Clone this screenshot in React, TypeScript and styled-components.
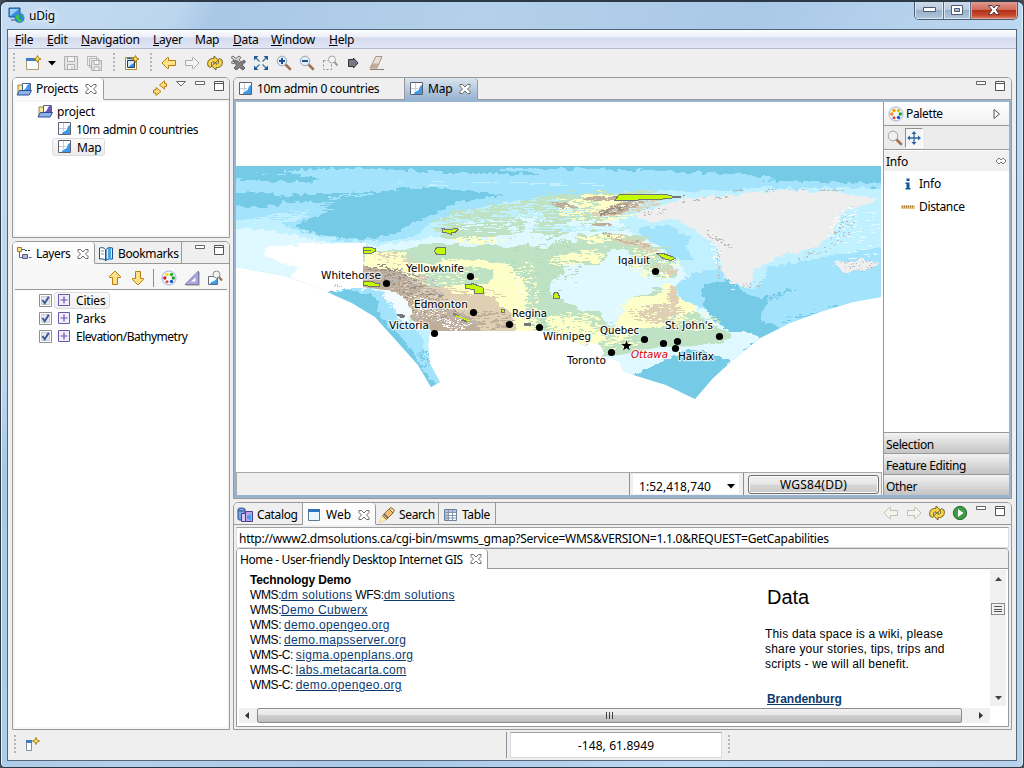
import React from "react";
import styled, { createGlobalStyle } from "styled-components";

const Global = createGlobalStyle`
  * { box-sizing: border-box; }
  html, body { margin: 0; padding: 0; overflow: hidden; background: #4a4f55; }
  body { font-family: "Noto Sans", "Open Sans", sans-serif; font-size: 12px; color: #000; }
  svg { display: block; flex: none; }
`;

/* ---------- window chrome ---------- */
const Frame = styled.div`
  width: 1024px; height: 768px; border: 1px solid #2c3a48; border-top-width: 2px; border-radius: 7px 7px 5px 5px;
  overflow: hidden; display: flex; flex-direction: column; padding: 0 6px;
  background: linear-gradient(115deg, #c5dcf2 0%, #bcd6ee 13%, #a9c8e6 16%, #b4d0ea 35%, #aac9e7 55%, #bdd8f1 75%, #b9d1ea 100%);
  box-shadow: inset 1px 0 #e4f0fb, inset -1px 0 #dff0fb;
`;
const TitleBar = styled.div`height: 27px; display: flex; align-items: center; padding-left: 1px; flex: none;`;
const Title = styled.div`margin-left: 4px; flex: 1; font-size: 12px; letter-spacing: -.2px; text-shadow: 0 0 6px #fff, 0 0 6px #fff;`;
const Caption = styled.div`
  display: flex; height: 19px; align-self: flex-start; margin: -1px -1px 0 0;
  border: 1px solid #4b5b70; border-top: 0; border-radius: 0 0 5px 5px; overflow: hidden;
`;
const CapButton = styled.div<{ $w: number; $close?: boolean }>`
  width: ${p => p.$w}px; display: flex; align-items: center; justify-content: center;
  border-right: ${p => (p.$close ? "0" : "1px solid #5d6f86")};
  box-shadow: inset 0 0 0 1px ${p => (p.$close ? "#e9a092" : "#dce8f4")};
  background: ${p => p.$close
    ? "linear-gradient(#e2a196, #cf6c5a 48%, #b02f16 50%, #c8492f 80%, #dd8870)"
    : "linear-gradient(#cfdceb, #b9cade 48%, #98afc9 50%, #b2c8df)"};
`;
const Client = styled.div`
  width: 1010px; height: 732px; background: #efefef; border: 1px solid #52677c;
  display: flex; flex-direction: column;
`;
const MenuBar = styled.div`
  height: 19px; flex: none; display: flex; align-items: center; padding: 2px 0 0 7px; border-bottom: 1px solid #b3bbcf;
  background: linear-gradient(#fdfdfe 0%, #eceff8 38%, #d5dbee 44%, #e0e6f5 100%);
`;
const MenuItem = styled.div<{ $w: number; $plain?: boolean }>`
  width: ${p => p.$w}px; white-space: nowrap; line-height: 18px; letter-spacing: -.25px;
  &::first-letter { text-decoration: ${p => (p.$plain ? "none" : "underline")}; }
`;
const ToolBar = styled.div`height: 28px; flex: none; display: flex; align-items: center; padding-left: 5px; gap: 7px;`;
const Grip = styled.div<{ $l?: number; $r?: number }>`
  width: 2px; height: 20px; margin: 0 ${p => p.$r ?? 0}px 0 ${p => p.$l ?? 0}px;
  background: repeating-linear-gradient(#b4b4b4 0 2px, transparent 2px 4px);
`;
const Main = styled.div`flex: 1; display: flex; gap: 3px; padding-left: 4px; min-height: 0;`;
const Column = styled.div<{ $w: number }>`width: ${p => p.$w}px; display: flex; flex-direction: column; gap: 3px;`;

/* ---------- view stacks ---------- */
const Panel = styled.div<{ $h: number }>`
  height: ${p => p.$h}px; border: 1px solid #999; border-radius: 5px 5px 0 0; overflow: hidden;
  display: flex; flex-direction: column; background: #f6f6f6;
`;
const Tabs = styled.div`height: 22px; flex: none; display: flex; background: #efefef;`;
const Tab = styled.div<{ $w: number; $state?: "active" | "focus"; $rule?: boolean; $low?: boolean }>`
  width: ${p => p.$w}px; display: flex; align-items: center; gap: 4px; padding: ${p => (p.$low ? 2 : 0)}px 0 0 3px; white-space: nowrap;
  border-right: ${p => (p.$state || p.$rule ? "1px solid #999" : "0")};
  border-bottom: 1px solid ${p => (p.$state === "active" ? "#fafafa" : p.$state === "focus" ? "#99b4d1" : "#999")};
  border-top-right-radius: ${p => (p.$state ? "4px" : "0")};
  background: ${p => p.$state === "active" ? "linear-gradient(#fff, #f8f8f8)" : p.$state === "focus" ? "linear-gradient(#dae5ef, #99b4d1)" : "none"};
  ${p => p.$state === "focus" && "border-left: 1px solid #999;"}
`;
const TabRest = styled.div<{ $pr?: number }>`
  flex: 1; display: flex; justify-content: flex-end; border-bottom: 1px solid #999; padding: 2px ${p => p.$pr ?? 4}px 0 0; gap: 7px;
`;
const Body = styled.div`flex: 1; background: #fff; margin: 2px; overflow: hidden;`;
const Label = styled.span<{ $ls?: number }>`white-space: nowrap; letter-spacing: ${p => p.$ls ?? -0.36}px;`;
const Row = styled.div<{ $pl: number; $gap?: number }>`
  height: 18px; display: flex; align-items: center; padding-left: ${p => p.$pl}px; gap: ${p => p.$gap ?? 4}px;
`;
const Chosen = styled.div`
  height: 18px; display: flex; align-items: center; gap: 5px; padding: 0 3px; margin-left: -4px;
  border: 1px solid #dcdcdc; border-radius: 3px; background: linear-gradient(#fafafa, #ececec);
`;
const LayerName = styled.div<{ $sel?: boolean }>`
  height: 17px; display: flex; align-items: center; gap: 6px; padding: 0 4px 0 3px;
  border: 1px solid ${p => (p.$sel ? "#dcdcdc" : "transparent")}; border-radius: 3px;
  background: ${p => (p.$sel ? "linear-gradient(#fafafa, #eee)" : "none")};
`;
const ViewBar = styled.div`
  height: 26px; flex: none; margin: 0 2px; padding: 2px 4px 0 0; border-bottom: 1px solid #999;
  display: flex; align-items: center; justify-content: flex-end; gap: 7px;
`;
const Divider = styled.div<{ $h: number }>`width: 1px; height: ${p => p.$h}px; background: #909090; flex: none;`;
const LayerList = styled.div`flex: 1; background: #fff; margin: 0 2px 2px; padding-top: 1px;`;

/* ---------- editor ---------- */
const EditorBody = styled.div`flex: 1; border: 2px solid #99b4d1; border-width: 2px 2px 3px; display: flex; background: #fff; min-height: 0;`;
const MapSide = styled.div`width: 647px; display: flex; flex-direction: column;`;
const MapStatus = styled.div`
  height: 23px; flex: none; width: 646px; border: 1px solid #a8a8a8; border-bottom: 0; background: #efefef;
  display: flex; align-items: center; padding-right: 2px;
`;
const Scale = styled.div`
  width: 106px; height: 20px; margin: 0 4px 0 3px; background: #fff; padding: 4px 4px 0 6px; display: flex; align-items: center; justify-content: space-between;
`;
const CrsButton = styled.div`
  width: 131px; height: 19px; margin-left: 4px; border: 1px solid #707070; border-radius: 3px; letter-spacing: .25px;
  display: flex; align-items: center; justify-content: center; box-shadow: inset 0 0 0 1px #fafafa; padding-top: 1px;
  background: linear-gradient(#f0f0f0, #e6e6e6 48%, #d6d6d6 52%, #cacaca);
`;
const Palette = styled.div`flex: 1; border-left: 1px solid #999; display: flex; flex-direction: column;`;
const PaletteHead = styled.div`
  height: 24px; display: flex; align-items: center; gap: 2px; padding: 0 8px 0 4px; border-bottom: 1px solid #999;
  background: linear-gradient(#fff, #f0f0f0);
`;
const PaletteTools = styled.div`
  height: 24px; display: flex; align-items: center; gap: 2px; padding: 0 3px; border-bottom: 1px solid #999; background: #ececec;
`;
const ToolOn = styled.div`
  width: 18px; height: 20px; display: flex; align-items: center; justify-content: center; background: #f6f6f6;
  border: 1px solid #fff; border-top-color: #909090; border-left-color: #909090;
`;
const InfoHead = styled.div`height: 20px; margin: 1px 0 1px; padding: 0 3px 0 2px; background: #f0f0f0; display: flex; align-items: center; justify-content: space-between;`;
const Entry = styled.div`height: 23px; display: flex; align-items: center; gap: 3px; padding-left: 16px;`;
const Spacer = styled.div`flex: 1;`;
const Drawer = styled.div`
  height: 21px; border-top: 1px solid #999; padding: 2px 0 0 2px; display: flex; align-items: center; letter-spacing: -.36px;
  background: linear-gradient(#f2f2f2, #c4c4c4);
`;

/* ---------- web view ---------- */
const WebBody = styled.div`flex: 1; display: flex; flex-direction: column; padding: 2px; background: #efefef; min-height: 0;`;
const Url = styled.div`
  height: 21px; flex: none; border: 1px solid #d8dde6; border-top-color: #a0a0a0; background: #fff; padding: 2px 0 0 2px; display: flex; align-items: center;
`;
const Browser = styled.div`flex: 1; border: 1px solid #999; border-radius: 4px 4px 0 0; display: flex; flex-direction: column; overflow: hidden; background: #fff; min-height: 0;`;
const PageTabs = styled.div`height: 20px; flex: none; display: flex; background: #efefef;`;
const PageTab = styled.div`
  width: 251px; border-right: 1px solid #999; background: #fff; border-radius: 0 4px 0 0; display: flex; align-items: center; gap: 4px; padding-left: 3px;
`;
const PageArea = styled.div`flex: 1; display: flex; min-height: 0; padding: 1px 2px 0 13px; font: 12px/15px "Liberation Sans", Arial, sans-serif;`;
const Links = styled.div`width: 515px; padding-top: 3px; white-space: nowrap; letter-spacing: -.4px;`;
const Bold = styled.b`letter-spacing: -.15px;`;
const A = styled.a`color: #0b3a70; text-decoration: underline; letter-spacing: .32px;`;
const Wiki = styled.div`flex: 1; letter-spacing: .18px;`;
const H2 = styled.div`font-size: 20px; line-height: 24px; padding: 15px 0 18px 2px; height: 57px; letter-spacing: 0;`;
const Region = styled.div`font-weight: 700; padding: 20px 0 0 2px; a { letter-spacing: -.05px; }`;
const VScroll = styled.div`
  width: 16px; height: 136px; background: #f0f0f0; display: flex; flex-direction: column; align-items: center; padding: 7px 0 6px;
`;
const VThumb = styled.div`
  width: 14px; height: 12px; margin-top: 22px; border: 1px solid #8c8c8c; background: #f0f0f0; padding: 2px 2px;
  display: flex; flex-direction: column; justify-content: space-between;
`;
const Bar = styled.div`height: 1px; background: #555;`;
const HScroll = styled.div`
  height: 15px; width: 751px; flex: none; margin: 1px 0 3px 2px; background: #f0f0f0; display: flex; align-items: center; padding: 0 7px 0 6px; gap: 8px;
`;
const HThumb = styled.div`
  flex: 1; height: 15px; margin-right: 9px; border: 1px solid #8c8c8c; border-radius: 2px; display: flex; align-items: center; justify-content: center; gap: 2px;
  background: linear-gradient(#f2f2f2, #e6e6e6 45%, #cfcfd0 50%, #bdbec0);
`;
const Tick = styled.div`width: 1px; height: 7px; background: #444;`;

/* ---------- status line ---------- */
const Status = styled.div`height: 30px; flex: none; display: flex; align-items: center; padding-left: 6px;`;
const Coord = styled.div`
  width: 212px; height: 26px; margin: 0 6px 0 3px; border: 1px solid #d6dbe4; border-top-color: #a0a0a0; background: #fff;
  display: flex; align-items: center; justify-content: center; letter-spacing: .1px;
`;
const StatusGap = styled.div`width: 466px;`;

/* ---------- icons ---------- */
type IconProps = { w?: number; h?: number; box?: string; children: React.ReactNode };
const Icon = ({ w = 16, h = 16, box, children }: IconProps) => (
  <svg width={w} height={h} viewBox={box ?? `0 0 ${w} ${h}`} fill="none">{children}</svg>
);
const CloseX = () => (
  <Icon w={15} h={12} box="-3 0 15 12"><path d="M1 1.500h2.500L6 4l2.500-2.500H11v2L8.500 6 11 8.500v2H8.500L6 8l-2.500 2.500H1v-2L3.500 6 1 3.500z" fill="#fff" stroke="#6a6a6a" /></Icon>
);
const MinIcon = () => <Icon w={12} h={12}><path d="M1.500 1.500h9v3h-9z" fill="#fff" stroke="#666" /></Icon>;
const MaxIcon = () => <Icon w={12} h={12}><path d="M1.500 1.500h9v9h-9zM1.500 3.500h9" fill="#fff" stroke="#555" /></Icon>;
const MapIcon = () => (
  <Icon>
    <path d="M2.500 1.500h12v12h-12z" fill="#fff" stroke="#5c6070" />
    <path d="M7.500 2v8M3 7.500h7" stroke="#c5cdd8" />
    <path d="M14 4v9H6c0-3 3-2 4.500-4S11 5 14 4z" fill="#3d9bec" />
  </Icon>
);
const FolderIcon = ({ tint = "#3d9bec" }: { tint?: string }) => (
  <Icon>
    <path d="M2 13V4h4l1 1h1v8z" fill="#f7e6a0" stroke="#a08838" />
    <path d="M6.500 2.500h8v8h-8z" fill="#fff" stroke="#55618c" />
    <path d="M14 3v7H7c1-2 2-1 3-3s1-4 4-4z" fill={tint} />
    <path d="M1 14l2.500-4.500h12L13 14z" fill="#8fb4e8" stroke="#2c4f9c" />
  </Icon>
);
const Arrow = ({ dir = "left", c = "#b97c10", f = "#ffe287" }: { dir?: string; c?: string; f?: string }) => {
  const r = dir === "left" ? 0 : dir === "up" ? 90 : dir === "right" ? 180 : 270;
  return <Icon><g transform={`rotate(${r} 8 8)`}><path d="M1 8l5.500-5.500h1v3h7v5h-7v3h-1z" fill={f} stroke={c} strokeLinejoin="round" /></g></Icon>;
};
const Sync = () => (
  <Icon>
    <path d="M1 11C-.5 5.500 3 3 7 3.500V1l4.500 4L7 9V6.800C4.500 6.500 3.800 8.500 5 11l-1.500 1.500z" fill="#f7d54b" stroke="#6a5615" strokeWidth=".9" />
    <path d="M15 5c1.500 5.500-2 8-6 7.500V15l-4.500-4L9 7v2.200C11.500 9.500 12.200 7.500 11 5l1.500-1.500z" fill="#f7d54b" stroke="#6a5615" strokeWidth=".9" />
  </Icon>
);
const Link2 = () => (
  <Icon>
    <path d="M14.500 6.500h-2V9L7.500 5 12.500.800V3.500h2z" fill="#ffdf80" stroke="#b97c10" />
    <path d="M1.500 10h2.500V7.500L9 11.500 4 15.500V13H1.500z" fill="#ffdf80" stroke="#b97c10" />
  </Icon>
);
const Spark = ({ x, y }: { x: number; y: number }) => (
  <path d={`M${x} ${y - 3.500}l1 2.500 2.500 1-2.500 1-1 2.500-1-2.500-2.500-1 2.500-1z`} fill="#ffe680" stroke="#a8820c" />
);
const NewIcon = () => (
  <Icon>
    <path d="M1.500 3.500h12v11h-12z" fill="#f2fbff" stroke="#b09a68" /><path d="M1 3h10v3H1z" fill="#3f7cc0" /><Spark x={12.500} y={4} />
  </Icon>
);
const Disk = () => (
  <Icon><path d="M1.500 1.500h13v13h-13z" fill="#e4e4e4" stroke="#b0b0b0" /><path d="M4.500 1.500h7v5h-7zM4.500 14v-4.500h7V14M9 11v3" fill="#f4f4f4" stroke="#b0b0b0" /></Icon>
);
const Disks = () => (
  <Icon>
    <path d="M1.500 1.500h9v9h-9zM3.500 3.500h9v9h-9z" fill="#eee" stroke="#b8b8b8" />
    <path d="M5.500 5.500h10v10h-10z" fill="#e4e4e4" stroke="#b0b0b0" /><path d="M8 5.500h5v4H8zM8 15v-3h5v3" fill="#f4f4f4" stroke="#b0b0b0" />
  </Icon>
);
const NewMap = () => (
  <Icon>
    <path d="M2.500 2.500h11v12h-11z" fill="#fff" stroke="#a98a2c" /><path d="M4.500 5.500h7v7h-7z" fill="#d9ecfb" stroke="#333a50" />
    <path d="M11 7v5H6c1-3 4-2 5-5z" fill="#2f8ee6" /><path d="M4 3.500h5" stroke="#2f5fa8" strokeWidth="1.500" /><Spark x={12.500} y={4} />
  </Icon>
);
const Delete = () => (
  <Icon>
    <path d="M1 2.500L3 1l3 2.500L9 1l2 1.500L9 5l3 2.500L10 9 6 7 3 9 1 7.500 4 5z" fill="#d8d8d8" stroke="#6a6a6a" />
    <path d="M3 6l3.500-.5L10 8l4-3 1.500 2L12 10l3 3-2 2-3.500-2.500L6 15l-2-2 2.500-3z" fill="#808080" stroke="#606060" />
  </Icon>
);
const Extent = () => (
  <Icon>
    <path d="M3 3l3.500 3.500M13 3L9.500 6.500M3 13l3.500-3.500M13 13L9.500 9.500" stroke="#3b74a8" strokeWidth="1.300" />
    <path d="M1 1h4.500L1 5.500zM15 1h-4.500L15 5.500zM1 15h4.500L1 10.500zM15 15h-4.500l4.500-4.500z" fill="#1f5c96" />
  </Icon>
);
const Zoom = ({ plus, plain }: { plus?: boolean; plain?: boolean }) => (
  <Icon>
    <path d="M9.500 9.500L14 14" stroke="#a2714f" strokeWidth="2.600" strokeLinecap="round" />
    <circle cx="6" cy="6" r="4.800" fill={plain ? "#f2f2e8" : "#e0ecf8"} stroke="#9aa6b0" />
    {!plain && <path d={plus ? "M3 6h6M6 3v6" : "M3 6h6"} stroke="#1c4f96" strokeWidth="2" />}
  </Icon>
);
const ZoomBox = () => (
  <Icon>
    <path d="M1.500 5.500h8v9h-8z" stroke="#8c8c8c" strokeDasharray="2 2" />
    <circle cx="10" cy="4.500" r="3.500" fill="#f4f4f4" stroke="#a8a8a8" /><path d="M12.500 7l3 3.500" stroke="#999" strokeWidth="2" />
  </Icon>
);
const Commit = () => <Icon><path d="M3.500 4.500h5V3L13 8l-4.500 5v-1.500h-5z" fill="#777986" stroke="#25262e" strokeWidth=".9" /></Icon>;
const Eraser = () => (
  <Icon w={18}>
    <path d="M2 13L8 1.500h6L9 13z" fill="#eadfd4" stroke="#a8958a" /><path d="M2 13l2.500-4.500h6L9 13z" fill="#c7aa94" /><path d="M2 14.500h14" stroke="#8c7c70" />
  </Icon>
);
const AppIcon = () => (
  <Icon w={17} h={17}>
    <path d="M1 1h11v9H1z" fill="#3f8fd8" stroke="#1c5590" /><path d="M2 2h9L2 9z" fill="#9bd0fa" /><path d="M3 12h6v2H3z" fill="#7894b8" />
    <circle cx="11.500" cy="11" r="5" fill="#2f82d4" /><path d="M8 9c2-4 4 0 3 2s2 0 3 2-3 3-4 1-3-2-2-5zM13 7l3 3-1 1z" fill="#3fc24a" />
  </Icon>
);
const LayersIcon = () => (
  <Icon>
    <path d="M1.500 1.500h4v4h-4z" fill="#ffdf80" stroke="#a87b1c" /><path d="M3.500 6v5.500h3M6 3.500h3M13 11.500h2.500" stroke="#2f6fb4" />
    <path d="M6.500 8.500h5v4h-5z" fill="#b9b2d8" stroke="#5c5c80" /><path d="M9 4.500h5" stroke="#333" strokeDasharray="2 1" />
  </Icon>
);
const Book = () => (
  <Icon>
    <path d="M1.500 2c3-1 5 0 6 1.500v11C6 13 4 12.500 1.500 13z" fill="#fff" stroke="#1d4f8c" /><path d="M8 3.500C9 2 11 1 14.500 2v11C12 12.500 9 13 8 14.500z" fill="#d6eaf8" stroke="#1d4f8c" />
    <path d="M10 2h3v12.500L11.500 12.500 10 14.500z" fill="#4ba3e0" /><path d="M3 5c1.500-.5 2 0 3 .500M3 8c1.500-.5 2 0 3 .500" stroke="#7a8a9a" />
  </Icon>
);
const PaletteIcon = ({ warm }: { warm?: boolean }) => (
  <Icon>
    <circle cx="8" cy="8" r="7" fill="#f3f8ff" stroke="#9cb4d8" />
    <circle cx="6" cy="4.500" r="1.700" fill={warm ? "#f5a000" : "#f5dc00"} /><circle cx="10.500" cy="4.500" r="1.700" fill={warm ? "#d8c400" : "#28b428"} />
    <circle cx="3.800" cy="8" r="1.700" fill={warm ? "#f08c20" : "#d81c1c"} /><circle cx="12.300" cy="8" r="1.700" fill="#1f9c2c" />
    <circle cx="6" cy="11.800" r="1.500" fill={warm ? "#e04038" : "#e04848"} /><circle cx="10.500" cy="11.500" r="1.700" fill="#2454c4" />
  </Icon>
);
const Triangle = () => (
  <Icon><path d="M14.500 1v13.500H1z" fill="#a9a6d8" stroke="#7f7cb0" /><path d="M11.500 7.500v4H7z" fill="#fff" /><path d="M2 15.500h13.500V2" stroke="#c8c4a8" /></Icon>
);
const MapZoom = () => (
  <Icon>
    <path d="M1.500 6.500h9v8h-9z" fill="#fff" stroke="#666a78" /><path d="M10 8v6H3c1-3 5-2 7-6z" fill="#3d9bec" />
    <circle cx="9.500" cy="4.500" r="3.500" fill="#f2f2ee" stroke="#8c9098" /><path d="M12 7l3 3.500" stroke="#8d7050" strokeWidth="2" />
  </Icon>
);
const Check = () => (
  <Icon w={13} h={13}><path d="M.5.5h12v12H.5z" fill="#fff" stroke="#8e8f8f" /><path d="M2.500 2.500h8v8h-8z" fill="#e6eaf0" stroke="#c8ccd2" /><path d="M3.500 6l2.200 3.200L9.800 2.800" stroke="#3d5896" strokeWidth="2" /></Icon>
);
const Grid = () => <Icon w={12} h={12}><path d="M.5.500h11v11H.500z" fill="#f0ecfa" stroke="#6b57ac" /><path d="M6 2.500v7M2.500 6h7" stroke="#6b57ac" strokeWidth="1.200" /></Icon>;
const Pan = () => (
  <Icon w={14} h={14}><path d="M7 2v10M2 7h10" stroke="#2f64a8" strokeWidth="1.300" /><path d="M7 0l2.500 3h-5zM7 14l2.500-3h-5zM0 7l3-2.500v5zM14 7l-3-2.500v5z" fill="#2f64a8" /></Icon>
);
const InfoIcon = () => <Icon><path d="M6.500 2.500h3V5h-3zM5.500 6.500h4V12h1v1.500h-5V12h1V8h-1z" fill="#14569c" /></Icon>;
const Ruler = () => <Icon><path d="M1 6.500h14v3.500H1z" fill="#ecc680" /><path d="M2.500 6.500v2M4.500 6.500v2M6.500 6.500v2M8.500 6.500v2M10.500 6.500v2M12.500 6.500v2" stroke="#a07838" /></Icon>;
const Pin = () => <Icon w={11} h={8}><path d="M1 4l3-3 2 2 2-2 3 3-3 3-2-2-2 2z" fill="#fff" stroke="#777" /></Icon>;
const CatalogIcon = () => (
  <Icon>
    <path d="M1 2.500c0-2 7-2 7 0V12c0 1.500-7 1.500-7 0z" fill="#7ba6e4" stroke="#28488c" /><path d="M1 3c2 1.500 5 1.500 7 0" stroke="#28488c" />
    <path d="M4.500 6.500h4v8h-4z" fill="#d8ccf4" stroke="#4c3c98" /><path d="M8.500 4.500h7v10h-7z" fill="#b7a4e6" stroke="#4c3c98" /><path d="M10 9l4-2v6l-4-1z" fill="#4aa0ec" />
  </Icon>
);
const WebIcon = () => <Icon><path d="M2.500 2.500h11v11h-11z" fill="#eaf6ff" stroke="#5b7894" /><path d="M2 2h12v3H2z" fill="#2f74bc" /></Icon>;
const Torch = () => (
  <Icon>
    <path d="M3 9l4 4-4 1.500L.500 15.500z" fill="#fff2b0" stroke="#d8c880" strokeWidth=".6" /><path d="M10 2l4 4-6.500 6.500-4-4z" fill="#f0c070" stroke="#96682c" />
    <path d="M10 2l2-1.500L15.500 3 14 6z" fill="#f0d8a0" stroke="#8a6a3c" /><path d="M5 7l4 4" stroke="#60607c" strokeWidth="1.600" />
  </Icon>
);
const TableIcon = () => (
  <Icon><path d="M2.500 2.500h12v11h-12z" fill="#fff" stroke="#6c8098" /><path d="M3 3h11v2H3zM3 5h3v8H3z" fill="#b4c4da" /><path d="M2.500 5.500h12M2.500 8.500h12M2.500 11h12M6.500 3v11M10.500 3v11" stroke="#8598b0" /></Icon>
);
const Play = () => <Icon><circle cx="8" cy="8" r="6.700" fill="#3f9c46" stroke="#286c34" /><path d="M6 4l5.500 4L6 12z" fill="#fff" /></Icon>;
const FastView = () => <Icon><path d="M2.500 3.500h5v10h-5z" fill="#fff" stroke="#7a8ea4" /><path d="M2 3h6v3H2z" fill="#3f7cc0" /><Spark x={12} y={4} /></Icon>;
const Caret = ({ w = 8, d = "M0 0h8L4 4.500z", h = 5, c = "#000" }: { w?: number; h?: number; d?: string; c?: string }) => <Icon w={w} h={h}><path d={d} fill={c} /></Icon>;

/* ---------- map ---------- */
const C = { deep: "#74cae6", mid: "#a3e3fb", light: "#c1f0ff", pale: "#e0f8ff", green: "#bfe2c5", green2: "#b2dabb", yellow: "#fefec8", tan: "#dfd0b4", brown: "#c0ae9c", dark: "#9d9186", ice: "#eeeeee", white: "#ffffff", grey: "#bdbdbd" };

const makeRandom = (seed: number) => () => {
  seed = (seed * 1664525 + 1013904223) % 4294967296;
  return seed / 4294967296;
};
/* Builds one path of small pixel dashes spread over an ellipse. */
const speckle = (cx: number, cy: number, rx: number, ry: number, n: number, seed: number, len = 3, slope = 0) => {
  const rnd = makeRandom(seed);
  let d = "";
  for (let i = 0; i < n; i++) {
    const a = rnd() * Math.PI * 2;
    const r = Math.sqrt(rnd());
    const dx = Math.cos(a) * r * rx;
    const x = Math.round(cx + dx);
    const y = Math.round(cy + Math.sin(a) * r * ry + dx * slope);
    const l = 1 + Math.floor(rnd() * len);
    d += `M${x} ${y}h${l}v1h-${l}z`;
  }
  return d;
};
type Speck = [string, number, number, number, number, number, number?, number?];
const landSpecks: Speck[] = [
  [C.green, 465, 218, 36, 5, 90, 8, -.1], [C.green, 500, 210, 40, 6, 130, 8, -.2], [C.green, 555, 206, 40, 12, 200, 8],
  [C.pale, 520, 226, 70, 7, 110, 10], [C.light, 500, 214, 60, 7, 70, 10, -.1], [C.light, 575, 228, 50, 3, 60, 12], [C.light, 545, 210, 40, 12, 80, 8],
  [C.green2, 545, 265, 38, 30, 120, 4], [C.yellow, 477, 240, 26, 4, 80, 6],
  [C.yellow, 565, 260, 18, 6, 80, 6], [C.yellow, 592, 255, 10, 6, 50, 5], [C.yellow, 600, 210, 45, 12, 150, 6],
  [C.yellow, 525, 290, 14, 30, 130, 3], [C.green, 535, 300, 12, 34, 120, 3], [C.white, 525, 300, 12, 38, 60, 1],
  [C.yellow, 440, 273, 40, 12, 90, 4], [C.tan, 455, 296, 46, 10, 160, 6],
  [C.tan, 395, 258, 24, 6, 70, 4, .2], [C.green, 440, 256, 40, 5, 60, 4],
  [C.dark, 395, 276, 30, 9, 140, 3, .3], [C.grey, 412, 282, 30, 12, 160, 3, .3],
  [C.dark, 425, 302, 34, 14, 110, 3, .2], [C.tan, 420, 298, 30, 18, 140, 3, .2], [C.grey, 440, 315, 34, 12, 110, 3, .1],
  [C.white, 425, 308, 24, 10, 60, 2, .3], [C.white, 455, 324, 16, 6, 70, 2], [C.brown, 485, 320, 30, 9, 120, 6],
  [C.yellow, 525, 322, 14, 8, 60, 5], [C.green2, 538, 322, 10, 8, 70, 3],
  [C.yellow, 572, 322, 28, 10, 150, 6], [C.green, 580, 324, 34, 10, 60, 4],
  [C.yellow, 650, 310, 38, 16, 120, 4], [C.tan, 655, 313, 28, 10, 120, 6], [C.tan, 672, 298, 6, 12, 70, 3],
  [C.green, 688, 322, 30, 10, 100, 5], [C.yellow, 690, 320, 24, 10, 70, 4], [C.white, 645, 312, 32, 16, 30, 1],
  [C.green, 640, 338, 40, 9, 70, 5], [C.yellow, 612, 343, 25, 6, 60, 4],
  [C.tan, 630, 242, 28, 5, 100, 6, .33], [C.brown, 625, 240, 26, 3, 50, 4, .3], [C.yellow, 655, 257, 26, 5, 50, 4, .3],
  [C.tan, 664, 269, 12, 5, 80, 4, .2], [C.yellow, 648, 272, 20, 6, 60, 4, .2], [C.yellow, 600, 237, 24, 3, 60, 5],
  [C.tan, 625, 207, 36, 6, 160, 6, -.2], [C.brown, 620, 207, 20, 5, 110, 5, -.3], [C.dark, 612, 209, 14, 4, 50, 4, -.3],
  [C.brown, 600, 198, 20, 2, 60, 6], [C.brown, 563, 205, 12, 3, 50, 4, .2], [C.brown, 600, 224, 9, 1.500, 40, 5],
  [C.dark, 650, 196, 38, 2, 40, 4],
];
const seaSpecks: Speck[] = [
  [C.light, 500, 183, 120, 3, 16, 20], [C.mid, 285, 173, 50, 2, 10, 14], [C.mid, 345, 196, 30, 2, 20, 8, -.1], [C.mid, 290, 210, 38, 8, 80, 12, -.15],
  [C.light, 275, 218, 34, 6, 70, 12, -.2], [C.pale, 730, 260, 10, 30, 50, 4, .5], [C.pale, 862, 240, 20, 30, 50, 6, -.3],
  [C.mid, 779, 303, 14, 12, 140, 2], [C.deep, 800, 315, 40, 3, 20, 5, -.3],
  [C.pale, 398, 306, 14, 8, 60, 3, .6], [C.white, 395, 300, 14, 8, 60, 3, .6], [C.grey, 337, 285, 4, 2, 8, 1], [C.deep, 424, 358, 8, 9, 60, 2],
];
const iceSpecks: Speck[] = [
  [C.grey, 650, 211, 16, 4, 22, 2], [C.grey, 700, 199, 26, 2, 14, 3, -.1], [C.grey, 714, 237, 16, 3, 34, 2, .6], [C.grey, 719, 262, 3, 18, 28, 1, .2], [C.white, 716, 245, 6, 20, 30, 2, .4],
  [C.grey, 842, 228, 14, 14, 44, 2, -.8], [C.white, 842, 226, 16, 18, 50, 3, -.6], [C.grey, 790, 190, 60, 1.500, 26, 3], [C.grey, 752, 284, 12, 4, 20, 1], [C.grey, 860, 265, 18, 6, 40, 1], [C.grey, 815, 252, 20, 3, 20, 2, -.3],
];
const Specks = ({ list, seed }: { list: Speck[]; seed: number }) => (
  <>{list.map(([fill, cx, cy, rx, ry, n, len, slope], i) => (
    <path key={i} fill={fill} d={speckle(cx, cy, rx, ry, n, seed + i * 977, len, slope)} />
  ))}</>
);

const cities: [string, number, number, number, number, number][] = [
  ["Whitehorse", 321, 279, 60, 386.500, 283.500], ["Yellowknife", 406, 272, 58, 470.500, 276.500], ["Edmonton", 414, 308, 54, 473.500, 312.500],
  ["Regina", 512, 317, 35, 509.500, 324.500], ["Winnipeg", 543, 340, 48, 539.500, 327.500], ["Victoria", 389, 329, 40, 434.500, 333.500],
  ["Iqaluit", 618, 264, 32, 655.500, 271.500], ["Quebec", 600, 334, 39, 644.500, 339.500], ["St. John's", 665, 329, 48, 719.500, 336.500],
  ["Toronto", 567, 364, 39, 611.500, 352.500], ["Halifax", 678, 360, 36, 675.500, 348.500],
];
const parks = [
  "M363 247.500h8l4 1v3l-4 2h-8zM363 250.500h8", "M363 281.500h9l4 2h3v3h-6l-10-1z", "M442 228.500l5 1h3l7-1 1 1-3 3h-3l-1 2-5-2h-3z", "M434 251l3-3.500h8v7h-8z",
  "M465 284.500h6l1-1 6 2 5 2 1 6h-10v-4l-9-1z", "M453 313.500l3 1 5 3 5 4M461 320.500l6 1", "M553.500 298v-4l2-2h2l1 3 1 1v2z", "M501.500 309.500h3v3h-3z",
  "M615 200l4-5 15-1h30l8 2 9 1-18 2-25 1z", "M657 253.500h6l9 3 3 2-4 2-8-2z",
];
const MapCanvas = () => (
  <svg width="645" height="370" viewBox="236 102 645 370" shapeRendering="crispEdges">
    <defs>
      <clipPath id="extent"><path d="M236 166H881V297L853 302 820 312 790 323 760 338 733 360 713 378 695 399 666 385 637 376 623 371 620 362 608 357 598 357 586 346 570 340 545 331H430L428 345 430 364 440 382 431 387 418 365 402 347 375 317 352 303 334 295 316 287 285 276 236 267z" /></clipPath>
      <clipPath id="canada"><path d="M363 244L430 238V190H760V340L700 346 660 347 620 355 598 357 586 346 570 340 545 331H432L424 325 412 320 405 308 395 298 385 290 363 287z" /></clipPath>
      <filter id="coast" x="0" y="0" width="100%" height="100%">
        <feTurbulence type="fractalNoise" baseFrequency=".035 .1" numOctaves="4" seed="7" />
        <feDisplacementMap in="SourceGraphic" scale="15" xChannelSelector="R" yChannelSelector="G" />
      </filter>
      <filter id="frayed" x="0" y="0" width="100%" height="100%">
        <feTurbulence type="fractalNoise" baseFrequency=".06 .2" numOctaves="4" seed="3" />
        <feDisplacementMap in="SourceGraphic" scale="26" xChannelSelector="R" yChannelSelector="G" />
      </filter>
      <filter id="rough" x="0" y="0" width="100%" height="100%">
        <feTurbulence type="fractalNoise" baseFrequency=".12 .2" numOctaves="2" seed="5" />
        <feDisplacementMap in="SourceGraphic" scale="8" xChannelSelector="R" yChannelSelector="G" />
      </filter>
    </defs>
    <g clipPath="url(#extent)">
      <path d="M236 166H881V400H236z" fill={C.mid} />
      <g filter="url(#rough)">
        <path d="M220 155H900V182H840L760 181 780 178 740 174 640 170 500 168V171L550 174 520 175 430 171 360 168 280 171 320 178 310 182 220 180z" fill={C.deep} />
        <path d="M853 190l20-3 20-1v7l-20 0z" fill={C.deep} />
        <path d="M230 193l32-2 12 4 20 0 30-2 55-1 20-3 32-2 30 4 46 4-50 7-15 9-28 12-16 9-22 6-26 1-30-4-25-8 32-18-12-6-30-1-20 6-35-2z" fill={C.deep} />
        <path d="M225 221l45-3 22 10 25 8 32 5 40 0 25-4 15-12 25-12 50-10 50-6 90-6 80 0 40-3 130 0V245l-70 12-55 10-8 18-20 10-20 2-14 22 40 10-40 30-60 35H540L520 330H230z" fill={C.light} />
        <path d="M225 227l50 4 42 10 40 6 35-3 40-6 55-14 60-12 60-4 26 25 34 20 30 30 12 20 30 30 30 8-20 20-40 6-50 0-30 10H536L500 330H400l-30-40-145-15z" fill={C.pale} />
        <path d="M640 228l28-3 22 12-3 10 6 14-18-2-14-12-20-10zM688 275l30-6 14 4 10 12 14 5 14-20 40-2 70-20V310l-90 30-60 0-10-20-30-16-20-12z" fill={C.mid} />
        <path d="M703 285l22-5 10 4 12 12 14 2 36-10-28 14-10 10 4 10 15 4 6 8-34 18-22-8-12-20-12-16z" fill={C.deep} />
        <path d="M628 378l30-15 30-14 25 6 18 6-36 45z" fill={C.deep} />
        <path d="M676 338l20-14 20-2 12 10 22 0 10 6-24 16-10 4-24-12z" fill={C.pale} />
      </g>
      <path d="M262 250l12-6 30-1 22 1 40 0V294h-24l-30-5-26-10 12-12-22-8z" fill="#fff" filter="url(#coast)" />
      <g filter="url(#rough)">
        <path d="M330 291l30-3 20 4 14 12 8 18 16 8 12 8v20l12 24-10 10-70-72z" fill={C.mid} />
        <path d="M326 292l22-2 16 2 12 6 2 14 10 14 16 14 20 30 12 14-6 6-60-66z" fill={C.deep} />
        <path d="M380 290h8l18 16 8 18 16 6 0 28-8-4-4-20-14-14z" fill={C.light} />
        <path d="M398 328l14-2 10 10 4 26-10-6-12-16z" fill={C.mid} />
      </g>
      <Specks list={seaSpecks} seed={31} />
      <g clipPath="url(#canada)">
        <g filter="url(#frayed)">
          <path d="M432 228l14-6 30-2 20-4 28 2 10 8-20 8-20 4-32 4-20-6zM440 214l30-3 20-4 20 0-10 6-26 6zM500 204l40-4 20 2-16 8-30 3zM545 200l34-8 50-4 25 3-34 14-20 18-32 3-22-2-16-8 26-6z" fill={C.green} />
          <path d="M560 200l40-6 30 4-24 14-16 2-24-4z" fill={C.yellow} />
          <path d="M528 224l30-2 14 8-18 5-20-2zM580 232l40 1 30 12 26 14-8 6-30-6-18-10-20-1-22-6zM625 262l30-1 22 9-3 8-28-4z" fill={C.green} />
        </g>
        <g filter="url(#coast)">
          <path d="M363 247l40 3 40-7 20 0 40 2 40 4 22-8 34-4 12 16-10 10-34 4-14 14 0 16 24 10 24 4 14 20 14-8 6-24 20-10 18 2 14 16 10 10 28 12 6 12-30 6-50 8-50 16-40-2-40-10-190-10z" fill={C.green} />
        </g>
        <path d="M551 288l8-13 20-6 30-2 26 0 14 8-22 12-4 22-10 16-8-2-4-12-20-6-18-8-12-4z" fill={C.pale} filter="url(#rough)" />
        <g filter="url(#coast)">
          <path d="M363 247l30 6 24 8 30-2 44 2 26 10 12 24-2 18 14 10-5 14H363z" fill={C.yellow} />
          <path d="M448 270l26-5 20 6-4 12-20 4-30-2-24-7z" fill={C.green} />
          <path d="M363 262l25 8 36 9 34 15 36 2 18 18 5 20H363z" fill={C.tan} />
          <path d="M355 262l33 6 24 8 20 10 12 18 18 10 16 8 4 14H355z" fill={C.brown} />
          <path d="M545 317l24-2 20 8 16 10-6 12-24-3-30-14zM632 300l28-7 10-12 10 16 16 14-22 12-30 6-24 12-14 4 14-30z" fill={C.yellow} />
          <path d="M640 310l24-10 16 6-4 12-26 6-12-4zM668 294l6-8 6 14-8 4z" fill={C.tan} />
        </g>
        <path d="M560 258l12-6 20 0 12 6-10 5-24 1zM586 240l12-3 6 6-14 2z" fill={C.yellow} filter="url(#frayed)" />
        <Specks list={landSpecks} seed={109} />
      </g>
      <path d="M380 290l12 0 14 10 6 14-4 8-10-6-6-12z" fill="#f4fbff" filter="url(#rough)" />
      <g filter="url(#rough)">
        <path d="M637 214l20-7 26-8 20-3 30 0 24-5 30-1 40 1 36 6 22 2-22 6-20 6-10 20-10 12-20 8-18 3-20 10-10 6-4 10-6 7-16-4-8-12-4-24-16-12-14-10-12-6-24 2-14-3z" fill={C.ice} />
        <path d="M832 263l20-3 20 0 8 5-16 5-22 2z" fill={C.ice} />
      </g>
      <Specks list={iceSpecks} seed={57} />
      <path d="M582 348l8-5 10 2 4 8-6 6-14-2z" fill="#fff" />
    </g>
    {parks.map(d => <path key={d} d={d} fill="#c3fb00" stroke="#747474" />)}
    <path d="M456 316h3v1h2v1h3v1h2v1h3v1" stroke="#c3fb00" />
    <path d="M397 315l4-1 4 2-3 2zM524 323h6v2h-6z" fill="#777" stroke="#777" />
    <g shapeRendering="auto">
      {[[663.500, 343.500], [677.500, 341.500]].map(([x, y]) => <circle key={x} cx={x} cy={y} r="3.600" />)}
      <path d="M626.500 340.500l1.300 3.500h3.900l-3 2.400 1.100 3.900-3.300-2.300-3.300 2.300 1.100-3.900-3-2.400h3.900z" />
      <g fontFamily="DejaVu Sans, sans-serif" fontSize="11" stroke="#fff" strokeOpacity=".7" strokeWidth="2.500" strokeLinejoin="round" paintOrder="stroke">
        {cities.map(([n, x, y, w]) => <text key={n} x={x} y={y} textLength={w} lengthAdjust="spacingAndGlyphs" fill="#000">{n}</text>)}
        <text x="631" y="358" textLength="37" lengthAdjust="spacingAndGlyphs" fill="#e00000" fontStyle="italic">Ottawa</text>
      </g>
      {cities.map(([n, , , , cx, cy]) => <circle key={n} cx={cx} cy={cy} r="3.600" />)}
    </g>
  </svg>
);

/* ---------- application ---------- */
const menus: [string, number][] = [["File", 32], ["Edit", 34], ["Navigation", 72], ["Layer", 42], ["Map", 38], ["Data", 38], ["Window", 58], ["Help", 30]];
const layers: [string, number][] = [["Cities", -0.2], ["Parks", -0.3], ["Elevation/Bathymetry", -0.5]];
const demoLinks: [string, string][] = [
  ["WMS:", "Demo Cubwerx"], ["WMS: ", "demo.opengeo.org"], ["WMS: ", "demo.mapsserver.org"],
  ["WMS-C: ", "sigma.openplans.org"], ["WMS-C: ", "labs.metacarta.com"], ["WMS-C: ", "demo.opengeo.org"],
];

export default function App() {
  return (
    <>
      <Global />
      <Frame>
        <TitleBar>
          <AppIcon /><Title>uDig</Title>
          <Caption>
            <CapButton $w={29}><Icon w={13} h={6}><path d="M.5.500h12v4H.500z" fill="#fff" stroke="#4c5a70" /></Icon></CapButton>
            <CapButton $w={27}><Icon w={12} h={10}><path d="M.5.500h11v9H.500zM3.500 3.500h5v3h-5z" fill="#fff" stroke="#4c5a70" fillRule="evenodd" /></Icon></CapButton>
            <CapButton $w={46} $close><Icon w={12} h={10}><path d="M.5.500h3.500l2 2.500L8 .500h3.500L8.200 5l3.300 4.500H8L6 7 4 9.500H.500L3.800 5z" fill="#fff" stroke="#5a3a40" /></Icon></CapButton>
          </Caption>
        </TitleBar>
        <Client>
          <MenuBar>
            {menus.map(([name, w]) => <MenuItem key={name} $w={w} $plain={name === "Map"}>{name}</MenuItem>)}
          </MenuBar>
          <ToolBar>
            <Grip $r={3} /><NewIcon /><Caret /><Disk /><Disks />
            <Grip $l={4} $r={1} /><NewMap /><Grip $l={4} $r={2} />
            <Arrow /><Arrow dir="right" c="#aaa" f="#f4f4f4" /><Sync /><Delete /><Extent /><Zoom plus /><Zoom /><ZoomBox /><Commit /><Eraser />
          </ToolBar>
          <Main>
            <Column $w={218}>
              <Panel $h={161}>
                <Tabs>
                  <Tab $w={91} $state="active"><FolderIcon /><Label>Projects</Label><CloseX /></Tab>
                  <TabRest>
                    <Link2 />
                    <Icon w={12} h={12}><path d="M1.500 1.500h9L6 6z" fill="#fff" stroke="#666" /></Icon>
                    <MinIcon /><MaxIcon />
                  </TabRest>
                </Tabs>
                <Body>
                  <Row $pl={22}><FolderIcon tint="#6a55b0" /><Label $ls={-0.2}>project</Label></Row>
                  <Row $pl={41}><MapIcon /><Label>10m admin 0 countries</Label></Row>
                  <Row $pl={41}><Chosen><MapIcon /><Label $ls={-0.2}>Map</Label></Chosen></Row>
                </Body>
              </Panel>
              <Panel $h={489}>
                <Tabs>
                  <Tab $w={82} $state="active" $low><LayersIcon /><Label>Layers</Label><CloseX /></Tab>
                  <Tab $w={87} $rule $low><Book /><Label>Bookmarks</Label></Tab>
                  <TabRest><MinIcon /><MaxIcon /></TabRest>
                </Tabs>
                <ViewBar>
                  <Arrow dir="up" /><Arrow dir="down" /><Divider $h={18} /><PaletteIcon /><Triangle /><MapZoom />
                </ViewBar>
                <LayerList>
                  {layers.map(([n, ls], i) => (
                    <Row key={n} $pl={24} $gap={2}><Check /><LayerName $sel={i === 0}><Grid /><Label $ls={ls}>{n}</Label></LayerName></Row>
                  ))}
                </LayerList>
              </Panel>
            </Column>
            <Column $w={779}>
              <Panel $h={422}>
                <Tabs>
                  <Tab $w={170}><MapIcon /><Label>10m admin 0 countries</Label></Tab>
                  <Tab $w={74} $state="focus"><MapIcon /><Label $ls={-0.2}>Map</Label><CloseX /></Tab>
                  <TabRest $pr={5}><MinIcon /><MaxIcon /></TabRest>
                </Tabs>
                <EditorBody>
                  <MapSide>
                    <MapCanvas />
                    <MapStatus>
                      <Spacer /><Divider $h={22} />
                      <Scale><Label $ls={0.05}>1:52,418,740</Label><Caret /></Scale>
                      <Divider $h={22} /><CrsButton>WGS84(DD)</CrsButton>
                    </MapStatus>
                  </MapSide>
                  <Palette>
                    <PaletteHead><PaletteIcon warm /><Label>Palette</Label><Spacer /><Icon w={8} h={12}><path d="M1 1.500v9L6.500 6z" fill="#fff" stroke="#555" /></Icon></PaletteHead>
                    <PaletteTools><Zoom plain /><ToolOn><Pan /></ToolOn></PaletteTools>
                    <InfoHead><Label $ls={-0.2}>Info</Label><Pin /></InfoHead>
                    <Entry><InfoIcon /><Label $ls={-0.2}>Info</Label></Entry>
                    <Entry><Ruler /><Label>Distance</Label></Entry>
                    <Spacer />
                    <Drawer>Selection</Drawer><Drawer>Feature Editing</Drawer><Drawer>Other</Drawer>
                  </Palette>
                </EditorBody>
              </Panel>
              <Panel $h={228}>
                <Tabs>
                  <Tab $w={69} $rule $low><CatalogIcon /><Label>Catalog</Label></Tab>
                  <Tab $w={73} $state="active" $low><WebIcon /><Label $ls={0}>Web</Label><CloseX /></Tab>
                  <Tab $w={63} $rule $low><Torch /><Label>Search</Label></Tab>
                  <Tab $w={57} $rule $low><TableIcon /><Label>Table</Label></Tab>
                  <TabRest $pr={5}><Arrow c="#c4c0b4" f="#f4f4ee" /><Arrow dir="right" c="#c4c0b4" f="#f4f4ee" /><Sync /><Play /><MinIcon /><MaxIcon /></TabRest>
                </Tabs>
                <WebBody>
                  <Url><Label $ls={-0.26}>http://www2.dmsolutions.ca/cgi-bin/mswms_gmap?Service=WMS&amp;VERSION=1.1.0&amp;REQUEST=GetCapabilities</Label></Url>
                  <Browser>
                    <PageTabs><PageTab><Label $ls={-0.39}>Home - User-friendly Desktop Internet GIS</Label><CloseX /></PageTab><TabRest /></PageTabs>
                    <PageArea>
                      <Links>
                        <Bold>Technology Demo</Bold><br />
                        WMS:<A>dm solutions</A> WFS:<A>dm solutions</A>
                        {demoLinks.map(([k, v], i) => <div key={i}>{k}<A>{v}</A></div>)}
                      </Links>
                      <Wiki>
                        <H2>Data</H2>
                        <div>This data space is a wiki, please<br />share your stories, tips, trips and<br />scripts - we will all benefit.</div>
                        <Region><A>Brandenburg</A></Region>
                      </Wiki>
                      <VScroll>
                        <Caret w={7} h={4} d="M0 4h7L3.500 0z" c="#444" />
                        <VThumb><Bar /><Bar /><Bar /></VThumb>
                        <Spacer />
                        <Caret w={7} h={4} d="M0 0h7L3.500 4z" c="#444" />
                      </VScroll>
                    </PageArea>
                    <HScroll>
                      <Caret w={4} h={7} d="M4 0v7L0 3.500z" c="#333" />
                      <HThumb><Tick /><Tick /><Tick /></HThumb>
                      <Caret w={4} h={7} d="M0 0v7l4-3.500z" c="#333" />
                    </HScroll>
                  </Browser>
                </WebBody>
              </Panel>
            </Column>
          </Main>
          <Status>
            <Grip $r={8} /><FastView /><StatusGap /><Divider $h={26} /><Coord>-148, 61.8949</Coord><Grip />
          </Status>
        </Client>
      </Frame>
    </>
  );
}
